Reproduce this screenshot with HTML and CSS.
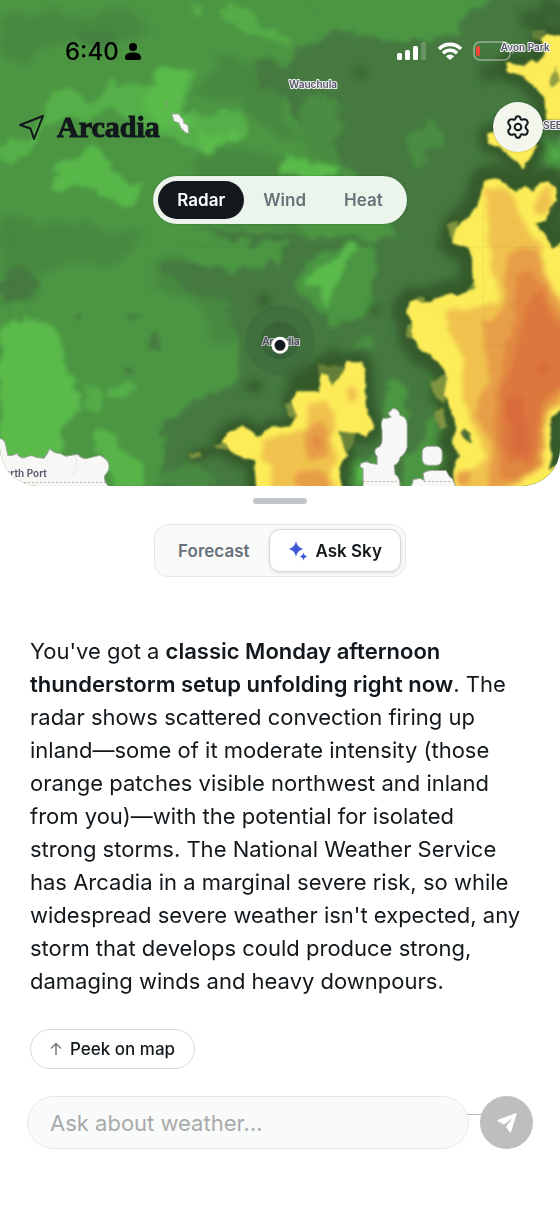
FILE: index.html
```html
<!DOCTYPE html>
<html lang="en">
<head>
  <meta charset="UTF-8" />
  <meta name="viewport" content="width=device-width, initial-scale=1" />
  <title>Arcadia - Ask Sky</title>
  <link rel="stylesheet" href="styles.css">
</head>
<body>

<section class="map">
  <svg class="map-canvas" viewBox="0 0 560 486" preserveAspectRatio="xMidYMid slice" aria-hidden="true">
    <defs>
      <filter id="rough" x="-5%" y="-5%" width="110%" height="110%">
        <feTurbulence type="fractalNoise" baseFrequency="0.05" numOctaves="3" seed="7" result="n" />
        <feDisplacementMap in="SourceGraphic" in2="n" scale="22" xChannelSelector="R" yChannelSelector="G" />
        <feGaussianBlur stdDeviation="2" />
      </filter>
      <filter id="haze" x="-5%" y="-5%" width="110%" height="110%">
        <feTurbulence type="fractalNoise" baseFrequency="0.04" numOctaves="3" seed="11" result="n" />
        <feDisplacementMap in="SourceGraphic" in2="n" scale="34" xChannelSelector="R" yChannelSelector="G" />
        <feGaussianBlur stdDeviation="4" />
      </filter>
      <filter id="cell" x="-5%" y="-5%" width="110%" height="110%">
        <feTurbulence type="fractalNoise" baseFrequency="0.09" numOctaves="2" seed="3" result="n" />
        <feDisplacementMap in="SourceGraphic" in2="n" scale="5" xChannelSelector="R" yChannelSelector="G" />
        <feGaussianBlur stdDeviation="1.3" />
      </filter>
      <filter id="core" x="-5%" y="-5%" width="110%" height="110%">
        <feTurbulence type="fractalNoise" baseFrequency="0.06" numOctaves="2" seed="5" result="n" />
        <feDisplacementMap in="SourceGraphic" in2="n" scale="10" xChannelSelector="R" yChannelSelector="G" />
        <feGaussianBlur stdDeviation="2.5" />
      </filter>
      <filter id="edge" x="-10%" y="-10%" width="120%" height="120%">
        <feGaussianBlur stdDeviation="4" />
      </filter>
      <path id="cellEast" d="M485 181L495 179L505 186L516 193L525 187L532 192L540 184L548 182L555 188L556 200L549 207L546 219L532 223L545 235L552 250L566 240L566 405L558 410L550 419L549 440L551 455L547 470L566 462L566 496L456 496L454 470L461 455L452 443L457 430L455 417L445 393L448 377L440 360L422 350L413 337L413 320L407 310L413 301L423 305L450 294L457 298L478 288L473 273L473 257L467 247L453 242L457 227L470 217L480 200Z" />
      <path id="cellSouth" d="M223 440L230 432L243 427L257 437L273 428L287 428L298 417L292 400L297 392L320 392L321 373L327 375L331 388L343 373L348 362L360 362L364 370L364 383L365 407L373 428L365 435L353 431L338 431L343 447L346 455L337 468L343 496L258 496L255 460L243 457L230 450Z" />
      <path id="cellNorth" d="M543 40L547 35L557 37L566 40L566 120L547 119L545 97L532 83L523 75L508 70L508 63L523 67L532 60L537 65L545 57Z" />
      <path id="cellGear" d="M488 134L500 131L536 146L532 153L523 167L513 158L500 147L489 143Z" />
    </defs>

    <rect width="560" height="486" fill="#4c9643" />

    <!-- light rain -->
    <g filter="url(#haze)" fill="#478841">
      <path d="M0 20L40 12L90 18L130 10L150 30L110 45L60 40L20 60L0 55Z" />
      <path d="M0 215L50 222L110 230L150 245L110 262L60 255L30 300L0 310Z" />
      <path d="M210 55L280 60L300 140L240 110L205 85Z" />
      <path d="M200 150L250 150L290 165L300 235L200 225L190 190Z" />
      <path d="M150 262L200 258L235 300L240 345L215 340L190 300L160 290Z" />
    </g>
    <g filter="url(#rough)" fill="#44793f">
      <path d="M305 45L345 34L400 42L455 34L470 10L500 -10L580 -10L580 320L440 320L420 500L225 500L150 496L165 470L160 430L185 405L235 385L240 345L228 310L225 300L180 285L190 258L240 256L250 240L190 226L230 228L330 238L400 238L385 200L350 172L310 158L295 120L275 75Z" />
      <path d="M252 62L275 58L282 80L262 88Z" />
      <path d="M2 272L25 268L40 285L20 300L2 298Z" />
      <path d="M160 264L185 262L182 280L165 282Z" />
      <path d="M80 30L115 32L105 48L80 44Z" opacity=".5" />
      <circle cx="78" cy="316" r="4" />
      <circle cx="134" cy="318" r="5" />
      <circle cx="127" cy="370" r="4" />
      <circle cx="154" cy="342" r="6" />
      <circle cx="58" cy="376" r="5" opacity=".6" />
      <circle cx="14" cy="380" r="6" opacity=".4" />
    </g>

    <!-- heavier returns -->
    <g filter="url(#rough)" fill="#4c9643">
      <path d="M300 262L325 248L365 242L378 262L370 300L355 322L330 325L310 305L296 285Z" />
      <path d="M408 133L430 122L446 128L444 145L425 150L432 165L418 168L406 150Z" opacity=".7" />
      <path d="M360 335L374 336L372 352L358 350Z" opacity=".7" />
      <path d="M385 385L402 380L408 420L384 425Z" />
      <path d="M300 110L320 90L340 105L335 140L345 172L300 165Z" opacity=".7" />
      <path d="M545 140L566 138L566 170L545 172L538 158Z" />
      <path d="M350 460L378 450L385 486L350 486Z" />
      <path d="M405 455L420 440L450 440L456 470L430 486L402 486Z" />
      <path d="M160 470L200 468L215 486L150 490Z" opacity=".6" />
      <path d="M180 250L250 246L290 240L282 262L225 272L190 268Z" />
    </g>
    <g filter="url(#rough)" fill="#5abb4b">
      <path d="M0 150L22 138L45 120L50 95L62 92L95 100L118 84L150 86L165 66L190 70L192 90L185 108L215 112L245 112L247 138L228 150L200 150L170 140L140 122L115 115L80 118L45 126L28 158L0 160Z" opacity=".7" />
      <path d="M152 84L168 68L185 72L182 100L196 130L168 128L140 110Z" />
      <path d="M196 134L235 132L240 146L205 148Z" />
      <path d="M50 166L72 160L92 144L112 160L122 178L138 186L136 200L118 204L92 190L62 190L48 182L64 174Z" opacity=".9" />
      <path d="M188 4L200 6L202 20L190 14Z" opacity=".6" />
      <path d="M222 8L245 6L256 22L280 30L290 45L265 38L235 26L222 22Z" opacity=".6" />
      <path d="M0 332L28 318L48 324L64 342L66 368L80 392L80 415L66 420L62 450L40 462L0 464Z" />
      <path d="M84 382L98 390L107 402L106 412L88 410Z" opacity=".6" />
      <path d="M110 394L114 386L135 380L132 388L116 398Z" opacity=".7" />
      <path d="M98 432L116 440L140 460L142 490L112 490L108 462L88 448Z" opacity=".8" />
      <path d="M282 156L310 162L338 170L330 178L300 176L282 168Z" />
      <path d="M312 272L332 262L350 246L360 252L345 270L335 290L332 308L322 300L322 288L308 284Z" />
      <path d="M438 456L450 452L452 470L444 472Z" />
      <path d="M354 468L366 462L364 482L354 480Z" />
      <path d="M545 150L556 146L560 160L548 162Z" opacity=".5" />
    </g>

    <!-- dark rim round the storm cells -->
    <g filter="url(#edge)" fill="none" stroke="#355a2b" stroke-linejoin="round">
      <use href="#cellEast" stroke-width="30" />
      <use href="#cellSouth" stroke-width="20" />
      <use href="#cellNorth" stroke-width="24" />
      <use href="#cellGear" stroke-width="20" />
      <path d="M190 456L225 448" stroke-width="10" />
      <path d="M290 385L340 355" stroke-width="18" />
      <path d="M480 74L515 66M520 20L545 20M540 6L566 14" stroke-width="18" opacity=".8" />
    </g>
    <g filter="url(#edge)" fill="#355a2b">
      <ellipse cx="254" cy="386" rx="8" ry="6" />
      <ellipse cx="263" cy="300" rx="6" ry="6" />
      <ellipse cx="374" cy="309" rx="4" ry="5" />
      <ellipse cx="360" cy="73" rx="5" ry="5" />
    </g>
    <g filter="url(#cell)" fill="#809440">
      <path d="M532 30L545 28L545 42L532 38Z" opacity=".6" />
      <path d="M318 365L342 366L345 372L332 392L318 390Z" opacity=".6" />
      <path d="M286 404L296 400L298 420L288 416Z" />
      <path d="M336 430L356 432L352 448L342 454Z" opacity=".7" />
      <path d="M188 454L200 450L202 456L190 458Z" />
      <path d="M214 446L226 440L226 450Z" />
      <path d="M448 371L452 376L444 402L434 396L430 382Z" />
      <path d="M434 412L443 406L446 428L440 430Z" />
      <path d="M406 326L416 320L416 340L406 338Z" />
      <path d="M449 224L458 220L456 244L449 236Z" />
      <path d="M466 292L476 282L484 288L470 298Z" />
      <path d="M414 298L424 296L426 308L416 308Z" />
    </g>

    <g filter="url(#cell)">
      <g fill="#fcec58" stroke="#fcec58" stroke-width="2" stroke-linejoin="round">
        <use href="#cellEast" />
        <use href="#cellSouth" />
        <use href="#cellNorth" />
        <use href="#cellGear" />
      </g>
      <path d="M549 82L556 66L560 80L552 88Z" fill="#94a040" />
      <path d="M463 428L471 433L472 442L465 440L459 432Z" fill="#4b6f35" />
    </g>

    <g filter="url(#core)">
      <g fill="#f0c24d">
        <path d="M486 190L498 186L513 198L523 217L527 230L540 247L547 277L557 293L570 310L570 395L550 410L544 433L542 470L530 476L507 492L457 492L459 476L473 470L487 457L473 427L462 397L463 367L457 350L447 327L445 313L457 309L500 303L493 273L490 250L487 217Z" />
        <path d="M538 192L550 186L552 198L544 214L534 212Z" />
        <path d="M260 443L275 437L303 428L308 403L327 403L335 417L333 440L337 457L330 473L342 500L275 500L270 467Z" />
        <ellipse cx="352" cy="394" rx="5" ry="8" />
      </g>
      <g fill="#e79f47">
        <path d="M506 254L523 247L538 250L543 273L553 293L570 315L570 390L544 413L542 467L530 474L503 490L488 490L493 443L475 417L487 380L485 350L483 322L505 308L505 273Z" />
        <ellipse cx="464" cy="478" rx="7" ry="6" />
        <ellipse cx="316" cy="440" rx="13" ry="20" />
        <path d="M292 486L296 474L312 468L326 472L332 490Z" />
      </g>
      <path d="M516 275L532 272L545 290L555 312L570 330L570 384L546 404L540 432L538 466L516 480L500 478L497 440L492 415L498 385L504 350L514 318Z" fill="#e18840" />
      <ellipse cx="317" cy="443" rx="5" ry="6" fill="#e18840" />
      <path d="M530 296L540 290L550 317L570 342L570 376L540 403L534 463L508 460L501 433L504 390L514 357L523 323Z" fill="#dc773d" />
      <path d="M508 398L521 397L526 427L527 460L514 452L512 425L506 410Z" fill="#d86b3b" />
      <circle cx="543" cy="368" r="6" fill="#d86b3b" />
    </g>

    <!-- gaps in coverage -->
    <g fill="#f7f7f6" stroke="#9aa598" stroke-width="1" stroke-linejoin="round">
      <path d="M393 408Q399 409 400 415Q407 417 407 424L407 447Q405 454 400 457Q399 463 394 465L395 474Q400 476 400 487L363 487L363 468Q358 467 361 463Q367 460 370 463L377 464L377 456Q373 452 376 448Q382 446 382 440L382 430Q380 422 383 418L387 418L391 417L388 413Z" />
      <rect x="422" y="446" width="20" height="19" rx="6" />
      <path d="M409 487Q413 485 413 479L420 478L424 480L423 473Q426 470 432 470L446 470Q449 477 452 478L456 487Z" />
      <path d="M-2 438Q5 438 6 445L8 455Q13 456 17 453Q21 459 26 457Q32 454 36 457L44 458Q48 454 50 448Q53 453 60 453L66 456L78 454Q82 459 88 458L100 455Q108 459 109 464Q110 470 105 475Q103 481 110 487L-2 487Z" />
      <path d="M172 114L179 114Q181 118 183 119L184 123L188 125L189 133L186 133L181 128L179 123L174 121Z" />
      <path d="M167 102L168 106" />
    </g>

    <!-- county lines -->
    <g fill="none" stroke="#2f4a35" stroke-width="1" stroke-dasharray="2 2" opacity=".1">
      <path d="M0 8H560M146 0V486M146 247H560M10 210V347H146M483 8V345H560" />
    </g>
    <path d="M20 482H110M363 481H398M424 481H450" fill="none" stroke="#b58e8e" stroke-width="1" stroke-dasharray="2 2" opacity=".7" />
    <path d="M76 455Q78 465 73 476M0 285Q40 275 62 245M185 486Q200 440 240 390T300 250M310 0Q330 60 318 120" fill="none" stroke="#3a4a3a" stroke-width="1" opacity=".08" />

    <g class="place-names">
      <text x="313" y="88" text-anchor="middle">Wauchula</text>
      <text x="525" y="51" text-anchor="middle">Avon Park</text>
      <text x="543" y="129">SEBRING</text>
      <text x="281" y="345" text-anchor="middle">Arcadia</text>
      <text x="47" y="477" text-anchor="end">North Port</text>
    </g>

    <circle cx="280" cy="340" r="35" fill="#1f3526" opacity=".12" />
    <circle cx="280" cy="340" r="19" fill="#1f3526" opacity=".2" />
    <circle cx="280" cy="345" r="7" fill="#12181c" stroke="#fff" stroke-width="3" />
  </svg>

  <div class="status-bar">
    <div class="status-time">
      <span>6:40</span>
      <svg width="16" height="17" viewBox="0 0 16 17" aria-hidden="true">
        <circle cx="8" cy="4" r="4" />
        <path d="M0 15C0 11 3 9.500 8 9.500S16 11 16 15Q16 17 14 17H2Q0 17 0 15Z" />
      </svg>
    </div>
    <div class="status-icons">
      <svg width="30" height="18" viewBox="0 0 30 18" fill="#fff" aria-hidden="true">
        <rect x="0" y="11" width="5" height="7" rx="1.500" />
        <rect x="8" y="8" width="5" height="10" rx="1.500" />
        <rect x="16" y="4" width="5" height="14" rx="1.500" />
        <rect x="24" y="0" width="5" height="18" rx="1.500" opacity=".2" />
      </svg>
      <svg width="26" height="18" viewBox="0 0 26 18" aria-hidden="true">
        <path d="M2 7A15.500 15.500 0 0 1 24 7" fill="none" stroke="#fff" stroke-width="3.600" />
        <path d="M6 11.200A9.800 9.800 0 0 1 20 11.200" fill="none" stroke="#fff" stroke-width="3.400" />
        <path d="M13 18L8.800 14.200Q13 10.800 17.200 14.200Z" fill="#fff" />
      </svg>
      <svg width="42" height="20" viewBox="0 0 42 20" aria-hidden="true">
        <rect x="1" y="1" width="36" height="18" rx="6" fill="none" stroke="#fff" stroke-opacity=".45" stroke-width="1.500" />
        <path d="M39 7Q41 8 41 10T39 13Z" fill="#fff" opacity=".4" />
        <rect x="3" y="5" width="4" height="10" rx="2" fill="#f0443c" />
      </svg>
    </div>
  </div>

  <header class="top-bar">
    <h1 class="location">
      <svg width="26" height="26" viewBox="0 0 26 26" fill="none" stroke="#12181c" stroke-width="2" stroke-linejoin="round" aria-hidden="true">
        <path d="M24 2L1 11L11.500 14.500L15 25Z" />
      </svg>
      Arcadia
    </h1>
    <button type="button" class="settings" aria-label="Settings">
      <svg width="24" height="24" viewBox="0 0 24 24" fill="none" stroke="#12181c" stroke-width="2" stroke-linejoin="round" aria-hidden="true">
        <path d="M9.600 3.200Q10 1.200 12 1.200T14.400 3.200Q14.800 5.300 16.900 4.500Q19.600 3.500 20.900 5.400Q22.600 8 20.900 9.400Q18.400 12 20.900 14.600Q22.600 16 20.900 18.600Q19.600 20.500 16.900 19.500Q14.800 18.700 14.400 20.800Q14 22.800 12 22.800T9.600 20.800Q9.200 18.700 7.100 19.500Q4.400 20.500 3.100 18.600Q1.400 16 3.100 14.600Q5.600 12 3.100 9.400Q1.400 8 3.100 5.400Q4.400 3.500 7.100 4.500Q9.200 5.300 9.600 3.200Z" />
        <circle cx="12" cy="12" r="3.300" />
      </svg>
    </button>
  </header>

  <nav class="layers">
    <button type="button" class="layer active">Radar</button>
    <button type="button" class="layer">Wind</button>
    <button type="button" class="layer">Heat</button>
  </nav>
</section>

<main class="sheet">
  <div class="handle"></div>

  <nav class="tabs">
    <button type="button" class="tab">Forecast</button>
    <button type="button" class="tab active">
      <svg width="20" height="20" viewBox="0 0 20 20" fill="#4059d6" aria-hidden="true">
        <path d="M8 0Q9.200 6.800 15.500 8Q9.200 9.200 8 16Q6.800 9.200 0.500 8Q6.800 6.800 8 0Z" />
        <path d="M15.500 11.500Q16.200 15 19.500 15.500Q16.200 16 15.500 19.500Q14.800 16 11.500 15.500Q14.800 15 15.500 11.500Z" />
      </svg>
      Ask Sky
    </button>
  </nav>

  <p class="answer">You've got a <strong>classic Monday afternoon thunderstorm setup unfolding right now</strong>. The radar shows scattered convection firing up inland—some of it moderate intensity (those orange patches visible northwest and inland from you)—with the potential for isolated strong storms. The National Weather Service has Arcadia in a marginal severe risk, so while widespread severe weather isn't expected, any storm that develops could produce strong, damaging winds and heavy downpours.</p>

  <button type="button" class="peek">
    <svg width="12" height="14" viewBox="0 0 12 14" fill="none" stroke="#7b8288" stroke-width="1.600" stroke-linecap="round" stroke-linejoin="round" aria-hidden="true">
      <path d="M6 12.500V1.500M1.500 6L6 1.500L10.500 6" />
    </svg>
    Peek on map
  </button>

  <form class="composer">
    <input type="text" class="question" aria-label="Ask about weather" placeholder="Ask about weather…" />
    <button type="submit" class="send" aria-label="Send">
      <svg width="20" height="20" viewBox="0 0 20 20" fill="#fff" aria-hidden="true">
        <path d="M18.500 0.200Q20 0 19.500 1.500L14.200 18.500Q13.300 20.500 12.200 18.700L9 13.600L15.500 5L7 11.500L1 8.500Q-0.500 7.500 1.200 6.700Z" />
      </svg>
    </button>
  </form>
</main>

</body>
</html>
```
FILE: styles.css
```css
* {
  box-sizing: border-box;
}

body {
  margin: 0;
  min-height: 100vh;
  background: #fff;
  color: #12181c;
  font-family: Inter, "Open Sans", sans-serif;
}

button,
input {
  font: inherit;
  color: inherit;
  margin: 0;
}

button {
  display: flex;
  align-items: center;
  justify-content: center;
  padding: 0;
  border: none;
  background: none;
  cursor: pointer;
}

/* map */
.map {
  position: relative;
  min-height: 40vh;
  padding-top: 36px;
  overflow: hidden;
  border-radius: 0 0 38px 38px;
}

.map-canvas {
  position: absolute;
  top: 0;
  left: 0;
  width: 100%;
  height: 100%;
  z-index: -1;
}

.place-names {
  font-family: Inter, sans-serif;
  font-size: 10px;
  font-weight: 600;
  fill: #555468;
  stroke: #f4f4f4;
  stroke-width: 2px;
  stroke-linejoin: round;
  paint-order: stroke;
}

.status-bar {
  display: flex;
  align-items: center;
  justify-content: space-between;
  height: 30px;
  padding: 0 45px 0 65px;
}

.status-time {
  display: flex;
  align-items: center;
  gap: 6px;
  font-size: 24px;
  font-weight: 500;
  color: #000;
}

.status-icons {
  display: flex;
  align-items: center;
  gap: 10px;
}

.top-bar {
  display: flex;
  align-items: center;
  justify-content: space-between;
  margin-top: 36px;
  padding: 0 17px 0 19px;
}

.location {
  display: flex;
  align-items: center;
  gap: 12px;
  margin: 0;
  font-family: "Liberation Serif", serif;
  font-size: 30px;
  font-weight: 700;
  -webkit-text-stroke: 1px #12181c;
}

.settings {
  width: 50px;
  height: 50px;
  border-radius: 50%;
  background: #f2f6ec;
  box-shadow: 0 0 2px rgba(0, 0, 0, 0.3);
}

.layers {
  display: flex;
  width: fit-content;
  margin: 24px auto 0;
  padding: 5px;
  border-radius: 24px;
  background: #ecf5ec;
  box-shadow: 0 0 2px rgba(0, 0, 0, 0.3);
}

.layer {
  height: 38px;
  padding: 0 19px;
  border-radius: 19px;
  font-size: 17px;
  font-weight: 600;
  color: #6a7279;
}

.layer.active {
  background: #12181c;
  color: #fff;
}

/* bottom sheet */
.sheet {
  display: flex;
  flex-direction: column;
  padding: 12px 27px 67px;
}

.handle {
  align-self: center;
  width: 54px;
  height: 6px;
  border-radius: 3px;
  background: #c1c6cb;
}

.tabs {
  display: flex;
  align-self: center;
  margin-top: 20px;
  padding: 4px;
  border: 1px solid #e4e7e9;
  border-radius: 14px;
  background: #f9fafa;
}

.tab {
  height: 43px;
  gap: 8px;
  padding: 0 18px;
  border: 1px solid transparent;
  border-radius: 11px;
  font-size: 17px;
  font-weight: 600;
  color: #6a7279;
}

.tab.active {
  border-color: #d5d9dd;
  background: #fff;
  color: #12181c;
  box-shadow: 0 1px 3px rgba(0, 0, 0, 0.12);
}

.answer {
  margin: 58px 0 0;
  padding: 0 8px 0 3px;
  font-size: 22px;
  line-height: 33px;
}

.answer strong {
  font-weight: 600;
}

.peek {
  align-self: flex-start;
  height: 40px;
  gap: 8px;
  margin: 31px 3px 0;
  padding: 0 19px;
  border: 1px solid #d5d8dd;
  border-radius: 20px;
  font-size: 17px;
  font-weight: 500;
}

.composer {
  position: relative;
  display: flex;
  gap: 11px;
  margin-top: 27px;
}

/* rule that runs behind the field and the send button */
.composer::before {
  content: "";
  position: absolute;
  top: 18px;
  left: 30px;
  right: 30px;
  z-index: -1;
  height: 1px;
  background: #b4b7b9;
}

.question {
  flex: 1;
  min-width: 0;
  height: 53px;
  padding: 0 22px;
  border: 1px solid #e4e7e9;
  border-radius: 27px;
  background: #f9fbfa;
  font-size: 22px;
}

.question::placeholder {
  color: #a8aaab;
}

.send {
  width: 53px;
  height: 53px;
  border-radius: 50%;
  background: #bebebe;
}
```
